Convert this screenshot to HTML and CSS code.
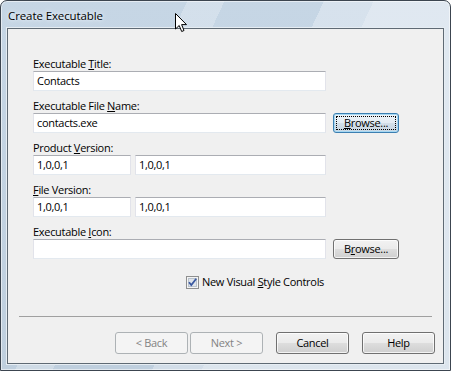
FILE: index.html
```html
<!DOCTYPE html>
<html>
<head>
<meta charset="utf-8">
<link rel="stylesheet" href="styles.css">
</head>
<body>
<div class="window">
  <div class="titlebar">
    <span class="title">Create Executable</span>
    <svg class="cursor" width="13" height="20" viewBox="0 0 13 20"><path d="M0.5 0.5 L0.5 16 L4.2 12.5 L6.7 18.5 L9 17.5 L6.6 11.6 L11.5 11.6 Z" fill="#fff" stroke="#000" stroke-width="1" stroke-linejoin="miter"/></svg>
  </div>
  <div class="client">
    <div class="form">
      <div class="group">
        <div class="label">Executable <u>T</u>itle:</div>
        <div class="row">
          <div class="input wide">Contacts</div>
        </div>
      </div>
      <div class="group">
        <div class="label">Executable File <u>N</u>ame:</div>
        <div class="row">
          <div class="input wide">contacts.exe</div>
          <button class="btn browse focused"><span class="focusrect"><u>B</u>rowse...</span></button>
        </div>
      </div>
      <div class="group">
        <div class="label">Product <u>V</u>ersion:</div>
        <div class="row versions">
          <div class="input small">1,0,0,1</div>
          <div class="input mid">1,0,0,1</div>
        </div>
      </div>
      <div class="group">
        <div class="label"><u>F</u>ile Version:</div>
        <div class="row versions">
          <div class="input small">1,0,0,1</div>
          <div class="input mid">1,0,0,1</div>
        </div>
      </div>
      <div class="group">
        <div class="label">Executable <u>I</u>con:</div>
        <div class="row">
          <div class="input wide"></div>
          <button class="btn browse">B<u>r</u>owse...</button>
        </div>
      </div>
      <div class="check-row">
        <svg class="checkbox" width="13" height="13" viewBox="0 0 13 13">
          <rect x="0.5" y="0.5" width="12" height="12" fill="#f4f4f4" stroke="#8e8f8f"/>
          <rect x="2.5" y="2.5" width="8" height="8" fill="#dfe4ea" stroke="#b9c2cc"/>
          <path d="M3 6.2 L5.3 9 L10.2 2.8" fill="none" stroke="#3a58a0" stroke-width="1.8"/>
        </svg>
        <span class="check-label">New Visual <u>S</u>tyle Controls</span>
      </div>
    </div>
    <div class="separator"></div>
    <div class="buttons">
      <div class="pair">
        <button class="btn disabled">&lt; Back</button>
        <button class="btn disabled">Next &gt;</button>
      </div>
      <button class="btn">Cancel</button>
      <button class="btn">Help</button>
    </div>
  </div>
</div>
</body>
</html>
```

FILE: styles.css
```css
* { box-sizing: border-box; }
html, body {
  margin: 0;
  padding: 0;
  width: 451px;
  height: 371px;
  overflow: hidden;
  background: #fff;
}
body {
  font-family: "Open Sans", "Noto Sans", sans-serif;
  font-size: 11px;
  color: #000;
}
u { text-decoration: underline; text-underline-offset: 1px; }

.window {
  width: 451px;
  height: 371px;
  border: 1px solid #3c4550;
  border-radius: 7px 7px 0 0;
  background:
    linear-gradient(115deg, rgba(255,255,255,0) 0 30%, rgba(255,255,255,0.25) 30% 36%, rgba(255,255,255,0) 36% 52%, rgba(255,255,255,0.3) 52% 60%, rgba(255,255,255,0.45) 60% 100%),
    linear-gradient(180deg, #c6d6e5 0%, #bfcfde 100%);
  display: flex;
  flex-direction: column;
  padding: 0 6px 6px 6px;
  box-shadow: inset 0 0 0 1px rgba(255,255,255,0.55);
}
.titlebar {
  height: 27px;
  flex: none;
  display: flex;
  align-items: center;
  padding-left: 1px;
  padding-top: 1px;
  position: relative;
}
.title {
  color: #000;
  font-size: 11.5px;
  letter-spacing: -0.1px;
  text-shadow: 0 0 6px #e8f0f8, 0 0 3px #eef4fa;
}
.cursor {
  position: absolute;
  left: 168px;
  top: 12px;
}

.client {
  flex: 1;
  border: 1px solid #5f6a74;
  outline: 1px solid #e6edf3;
  background: #f0f0f0;
  display: flex;
  flex-direction: column;
  padding: 28px 8px 9px 11px;
  letter-spacing: -0.3px;
}
.form {
  display: flex;
  flex-direction: column;
  padding-left: 14px;
  gap: 8px;
}
.group {
  display: flex;
  flex-direction: column;
  gap: 0;
}
.label {
  height: 14px;
  line-height: 14px;
  color: #000;
}
.row {
  display: flex;
  align-items: center;
  gap: 7px;
}
.row.versions { gap: 4px; }
.input {
  height: 20px;
  background: #fff;
  border: 1px solid #e2e3ea;
  border-top-color: #abadb3;
  border-bottom-color: #e3e9ef;
  padding: 0 0 0 3px;
  line-height: 18px;
  color: #000;
}
.input.wide { width: 293px; }
.input.small { width: 98px; }
.input.mid { width: 191px; }

.btn {
  font-family: inherit;
  font-size: inherit;
  letter-spacing: inherit;
  color: #000;
  width: 73px;
  height: 22px;
  border: 1px solid #707070;
  border-radius: 3px;
  background: linear-gradient(180deg, #f2f2f2 0%, #ebebeb 48%, #dddddd 52%, #cfcfcf 100%);
  box-shadow: inset 0 0 0 1px rgba(255,255,255,0.75);
  padding: 0;
  line-height: 18px;
  display: flex;
  align-items: center;
  justify-content: center;
}
.btn.browse {
  width: 66px;
  height: 20px;
}
.btn.focused {
  border-color: #3c7fb1;
  background: linear-gradient(180deg, #eef4f9 0%, #e3ecf3 48%, #d3dfe9 52%, #c8d6e2 100%);
  box-shadow: inset 0 0 0 1px #a6d8f3;
}
.focusrect {
  display: block;
  width: 60px;
  height: 14px;
  line-height: 12px;
  border: 1px dotted #000;
}
.btn.disabled {
  color: #838383;
  border-color: #adb2b5;
  background: #f4f4f4;
  box-shadow: none;
}

.check-row {
  display: flex;
  align-items: center;
  gap: 3px;
  margin-top: 8px;
  padding-left: 153px;
  height: 14px;
}
.checkbox { flex: none; }
.check-label { line-height: 14px; }

.separator {
  margin-top: 27px;
  height: 1px;
  margin-right: 3px;
  background: #a0a0a0;
}
.buttons {
  margin-top: auto;
  display: flex;
  justify-content: flex-end;
  gap: 13px;
}
.pair {
  display: flex;
  gap: 2px;
}
```
